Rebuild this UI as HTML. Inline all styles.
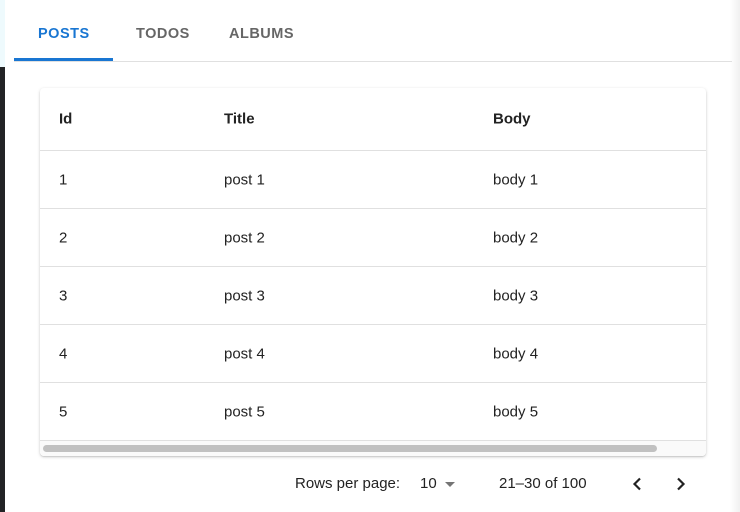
<!DOCTYPE html>
<html><head><style>
body{margin:0;width:740px;height:512px;overflow:hidden;background:#fff;font-family:"Liberation Sans",Arial,sans-serif;position:relative}
.lb1{position:absolute;left:0;top:0;width:5px;height:67px;background:#eefafd}
.lb2{position:absolute;left:0;top:67px;width:5px;height:445px;background:#222326}
.rg{position:absolute;right:0;top:0;width:10px;height:512px;background:linear-gradient(90deg,#fff,#f0f0f0)}
.tab{position:absolute;top:26px;font-size:14.5px;font-weight:bold;letter-spacing:.5px;color:#666}
.ul{position:absolute;left:14px;top:58px;width:99px;height:3px;background:#1976d2}
.div{position:absolute;left:14px;top:61px;width:718px;height:1px;background:#e0e0e0}
.card{position:absolute;left:40px;top:88px;width:666px;height:368px;background:#fff;box-shadow:0 1px 3px rgba(0,0,0,.18),0 1px 1px rgba(0,0,0,.1);border-radius:4px;overflow:hidden}
.row{position:absolute;left:0;width:666px;border-bottom:1px solid #e0e0e0;font-size:15px;color:#222}
.row span{position:absolute;top:50%;transform:translateY(-50%)}
.sb{position:absolute;left:0;top:353px;width:666px;height:15px;background:#fafafa}
.th{position:absolute;left:3px;top:4px;width:614px;height:7px;border-radius:4px;background:#c1c1c1}
.pg{position:absolute;top:475px;font-size:15px;color:#222}
</style></head><body>
<div class="lb1"></div><div class="lb2"></div><div class="rg"></div>
<div class="tab" style="left:38px;color:#1976d2">POSTS</div>
<div class="tab" style="left:136px">TODOS</div>
<div class="tab" style="left:229px">ALBUMS</div>
<div class="ul"></div><div class="div"></div>
<div class="card">
<div class="row" style="top:0;height:62px;font-weight:bold"><span style="left:19px">Id</span><span style="left:184px">Title</span><span style="left:453px">Body</span></div>
<div class="row" style="top:63px;height:57px"><span style="left:19px">1</span><span style="left:184px">post 1</span><span style="left:453px">body 1</span></div>
<div class="row" style="top:121px;height:57px"><span style="left:19px">2</span><span style="left:184px">post 2</span><span style="left:453px">body 2</span></div>
<div class="row" style="top:179px;height:57px"><span style="left:19px">3</span><span style="left:184px">post 3</span><span style="left:453px">body 3</span></div>
<div class="row" style="top:237px;height:57px"><span style="left:19px">4</span><span style="left:184px">post 4</span><span style="left:453px">body 4</span></div>
<div class="row" style="top:295px;height:57px"><span style="left:19px">5</span><span style="left:184px">post 5</span><span style="left:453px">body 5</span></div>
<div class="sb"><div class="th"></div></div>
</div>
<div class="pg" style="left:295px">Rows per page:</div>
<div class="pg" style="left:420px">10</div>
<svg style="position:absolute;left:444px;top:481px" width="12" height="6"><path d="M1 1h10l-5 5z" fill="#757575"/></svg>
<div class="pg" style="left:499px">21–30 of 100</div>
<svg style="position:absolute;left:628px;top:475px" width="18" height="18"><path d="M12 3.5L6.5 9l5.5 5.5" stroke="#222" stroke-width="2.2" fill="none"/></svg>
<svg style="position:absolute;left:672px;top:475px" width="18" height="18"><path d="M6 3.5L11.5 9 6 14.5" stroke="#222" stroke-width="2.2" fill="none"/></svg>
</body></html>
